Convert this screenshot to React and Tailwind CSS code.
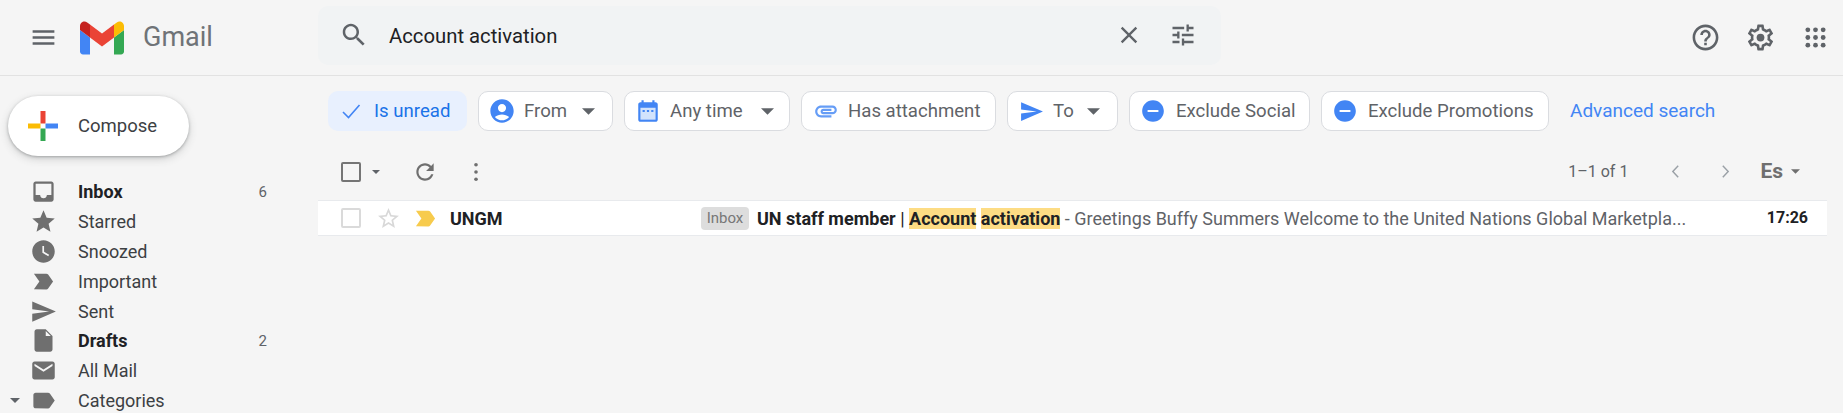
import { Fragment } from "react";

const Icon = ({ d, className = "", fill = "currentColor", children }) => (
  <svg viewBox="0 0 24 24" className={className} fill={fill}>
    {d && <path d={d} fillRule="evenodd" />}
    {children}
  </svg>
);

const paths = {
  menu: "M3 18h18v-2H3v2zm0-5h18v-2H3v2zm0-7v2h18V6H3z",
  search: "M15.5 14h-.79l-.28-.27C15.41 12.59 16 11.11 16 9.5 16 5.91 13.09 3 9.5 3S3 5.91 3 9.5 5.91 16 9.5 16c1.61 0 3.09-.59 4.23-1.57l.27.28v.79l5 4.99L20.49 19l-4.99-5zm-6 0C7.01 14 5 11.99 5 9.5S7.01 5 9.5 5 14 7.01 14 9.5 11.99 14 9.5 14z",
  close: "M19 6.41L17.59 5 12 10.59 6.41 5 5 6.41 10.59 12 5 17.59 6.41 19 12 13.41 17.59 19 19 17.59 13.41 12z",
  tune: "M3 17v2h6v-2H3zM3 5v2h10V5H3zm10 16v-2h8v-2h-8v-2h-2v6h2zM7 9v2H3v2h4v2h2V9H7zm14 4v-2H11v2h10zm-6-4h2V7h4V5h-4V3h-2v6z",
  help: "M11 18h2v-2h-2v2zm1-16C6.48 2 2 6.48 2 12s4.48 10 10 10 10-4.48 10-10S17.52 2 12 2zm0 18c-4.41 0-8-3.59-8-8s3.59-8 8-8 8 3.59 8 8-3.59 8-8 8zm0-14c-2.21 0-4 1.79-4 4h2c0-1.1.9-2 2-2s2 .9 2 2c0 2-3 1.75-3 5h2c0-2.25 3-2.5 3-5 0-2.21-1.79-4-4-4z",
  gear: "M19.43 12.98c.04-.32.07-.64.07-.98 0-.34-.03-.66-.07-.98l2.11-1.65c.19-.15.24-.42.12-.64l-2-3.46c-.09-.16-.26-.25-.44-.25-.06 0-.12.01-.17.03l-2.49 1c-.52-.4-1.08-.73-1.69-.98l-.38-2.65C14.46 2.18 14.25 2 14 2h-4c-.25 0-.46.18-.49.42l-.38 2.65c-.61.25-1.17.59-1.69.98l-2.49-1c-.06-.02-.12-.03-.18-.03-.17 0-.34.09-.43.25l-2 3.46c-.13.22-.07.49.12.64l2.11 1.65c-.04.32-.07.65-.07.98 0 .33.03.66.07.98l-2.11 1.65c-.19.15-.24.42-.12.64l2 3.46c.09.16.26.25.44.25.06 0 .12-.01.17-.03l2.49-1c.52.4 1.08.73 1.69.98l.38 2.65c.03.24.24.42.49.42h4c.25 0 .46-.18.49-.42l.38-2.65c.61-.25 1.17-.59 1.69-.98l2.49 1c.06.02.12.03.18.03.17 0 .34-.09.43-.25l2-3.46c.12-.22.07-.49-.12-.64l-2.11-1.65zm-1.98-1.71c.04.31.05.52.05.73 0 .21-.02.43-.05.73l-.14 1.13.89.7 1.08.84-.7 1.21-1.27-.51-1.04-.42-.9.68c-.43.32-.84.56-1.25.73l-1.06.43-.16 1.13-.2 1.35h-1.4l-.19-1.35-.16-1.13-1.06-.43c-.43-.18-.83-.41-1.23-.71l-.91-.7-1.06.43-1.27.51-.7-1.21 1.08-.84.89-.7-.14-1.13c-.03-.31-.05-.54-.05-.74s.02-.43.05-.73l.14-1.13-.89-.7-1.08-.84.7-1.21 1.27.51 1.04.42.9-.68c.43-.32.84-.56 1.25-.73l1.06-.43.16-1.13.2-1.35h1.39l.19 1.35.16 1.13 1.06.43c.43.18.83.41 1.23.71l.91.7 1.06-.43 1.27-.51.7 1.21-1.07.85-.89.7.14 1.13z",
  refresh: "M17.65 6.35C16.2 4.9 14.21 4 12 4c-4.42 0-7.99 3.58-7.99 8s3.57 8 7.99 8c3.73 0 6.84-2.55 7.73-6h-2.08c-.82 2.33-3.04 4-5.65 4-3.31 0-6-2.69-6-6s2.69-6 6-6c1.66 0 3.14.69 4.22 1.78L13 11h7V4l-2.35 2.35z",
  inbox: "M19 3H5c-1.1 0-2 .9-2 2v14c0 1.1.9 2 2 2h14c1.1 0 2-.9 2-2V5c0-1.1-.9-2-2-2zm0 12h-4c0 1.66-1.35 3-3 3s-3-1.34-3-3H5V5h14v10z",
  star: "M12 17.27L18.18 21l-1.64-7.03L22 9.24l-7.19-.61L12 2 9.19 8.63 2 9.24l5.46 4.73L5.82 21z",
  starBorder: "M22 9.24l-7.19-.62L12 2 9.19 8.63 2 9.24l5.46 4.73L5.82 21 12 17.27 18.18 21l-1.63-7.03L22 9.24zM12 15.4l-3.76 2.27 1-4.28-3.32-2.88 4.38-.38L12 6.1l1.71 4.04 4.38.38-3.32 2.88 1 4.28L12 15.4z",
  clock: "M11.99 2C6.47 2 2 6.48 2 12s4.47 10 9.99 10C17.52 22 22 17.52 22 12S17.52 2 11.99 2zm4.25 14.32L11 13V7h1.5v5.25l4.5 2.67-.76 1.4z",
  important: "M3.5 18.99l11 .01c.67 0 1.27-.33 1.63-.84L20.5 12l-4.37-6.16c-.36-.51-.96-.84-1.63-.84l-11 .01L8.34 12 3.5 18.99z",
  send: "M2.01 21L23 12 2.01 3 2 10l15 2-15 2z",
  draft: "M14 2H6c-1.1 0-2 .9-2 2v16c0 1.1.9 2 2 2h12c1.1 0 2-.9 2-2V8l-6-6zm0 1.5V8h4.5L14 3.5z",
  mail: "M20 4H4c-1.1 0-2 .9-2 2v12c0 1.1.9 2 2 2h16c1.1 0 2-.9 2-2V6c0-1.1-.9-2-2-2zm0 4l-8 5-8-5V6l8 5 8-5v2z",
  label: "M17.63 5.84C17.27 5.33 16.67 5 16 5L5 5.01C3.9 5.01 3 5.9 3 7v10c0 1.1.9 1.99 2 1.99L16 19c.67 0 1.27-.33 1.63-.84L22 12l-4.37-6.16z",
  person: "M12 2C6.48 2 2 6.48 2 12s4.48 10 10 10 10-4.48 10-10S17.52 2 12 2zm0 4c1.93 0 3.5 1.57 3.5 3.5S13.93 13 12 13s-3.5-1.57-3.5-3.5S10.07 6 12 6zm0 14c-2.03 0-4.43-.82-6.14-2.88C7.55 15.8 9.68 15 12 15s4.45.8 6.14 2.12C16.43 19.18 14.03 20 12 20z",
  clip: "M2 12.5C2 9.46 4.46 7 7.5 7H18c2.21 0 4 1.79 4 4s-1.79 4-4 4H9.5C8.12 15 7 13.88 7 12.5S8.12 10 9.5 10H17v2H9.41c-.55 0-.55 1 0 1H18c1.1 0 2-.9 2-2s-.9-2-2-2H7.5C5.57 9 4 10.57 4 12.5S5.57 16 7.5 16H17v2H7.5C4.46 18 2 15.54 2 12.5z",
  minus: "M12 2C6.48 2 2 6.48 2 12s4.48 10 10 10 10-4.48 10-10S17.52 2 12 2zm5 11H7v-2h10v2z",
};

const Caret = ({ className = "" }) => (
  <svg viewBox="0 0 10 5" className={className} fill="currentColor">
    <path d="M0 0h10L5 5z" />
  </svg>
);

const GmailLogo = () => (
  <svg viewBox="52 42 88 66" className="w-[44px] h-[34px] shrink-0">
    <path fill="#4285f4" d="M58 108h14V74L52 59v43c0 3.32 2.69 6 6 6" />
    <path fill="#34a853" d="M120 108h14c3.32 0 6-2.69 6-6V59l-20 15" />
    <path fill="#fbbc04" d="M120 48v26l20-15v-8c0-7.42-8.47-11.65-14.4-7.2" />
    <path fill="#ea4335" d="M72 74V48l24 18 24-18v26L96 92" />
    <path fill="#c5221f" d="M52 51v8l20 15V48l-5.6-4.2c-5.94-4.45-14.4-.22-14.4 7.2" />
  </svg>
);

const CalendarIcon = ({ className }) => (
  <svg viewBox="0 0 24 24" className={className}>
    <path fill="#4285f4" d="M19 4h-1V2h-2v2H8V2H6v2H5C3.9 4 3 4.9 3 6v14c0 1.1.9 2 2 2h14c1.1 0 2-.9 2-2V6c0-1.1-.9-2-2-2z" />
    <path fill="#d2e3fc" d="M5 9h14v11H5z" />
    <path fill="#4285f4" d="M7 11h2v2H7zm4 0h2v2h-2zm4 0h2v2h-2z" />
  </svg>
);

function Chip({ width, children }) {
  return (
    <div className={`h-10 shrink-0 flex items-center bg-white border border-[#dadce0] rounded-[10px] text-[#5f6368] ${width}`}>
      {children}
    </div>
  );
}

const navItems = [
  { name: "Inbox", icon: paths.inbox, bold: true, count: "6" },
  { name: "Starred", icon: paths.star },
  { name: "Snoozed", icon: paths.clock },
  { name: "Important", icon: paths.important },
  { name: "Sent", icon: paths.send },
  { name: "Drafts", icon: paths.draft, bold: true, count: "2" },
  { name: "All Mail", icon: paths.mail },
  { name: "Categories", icon: paths.label, caret: true },
];

export default function App() {
  return (
    <div className="w-[1843px] h-[413px] overflow-hidden bg-[#f5f5f5] font-['Roboto',sans-serif] text-[#202124]">
      {/* HEADER */}
      <header className="h-[76px] flex items-center border-b border-[#e2e2e2]">
        <div className="w-[318px] shrink-0 flex items-center pl-[29px]">
          <Icon d={paths.menu} className="w-[29px] h-[29px] text-[#5f6368] shrink-0" />
          <div className="ml-[22px]"><GmailLogo /></div>
          <span className="ml-[19px] text-[27px] text-[#6f7377] leading-none">Gmail</span>
        </div>
        <div className="w-[903px] h-[59px] -mt-[5px] bg-[#f1f3f4] rounded-[10px] flex items-center pl-[21px] pr-[24px]">
          <Icon d={paths.search} className="w-[30px] h-[30px] text-[#5f6368] shrink-0" />
          <span className="ml-[20px] pt-[3px] text-[20.3px]">Account activation</span>
          <Icon d={paths.close} className="ml-auto w-[28px] h-[28px] text-[#5f6368] shrink-0" />
          <Icon d={paths.tune} className="ml-[26px] w-[28px] h-[28px] text-[#5f6368] shrink-0" />
        </div>
        <div className="ml-auto flex items-center pr-[16px]">
          <Icon d={paths.help} className="w-[31px] h-[31px] text-[#5f6368]" />
          <Icon className="ml-[24px] w-[31px] h-[31px] text-[#5f6368]" d={paths.gear}>
            <circle cx="12" cy="12" r="3" />
          </Icon>
          <svg viewBox="0 0 24 24" className="ml-[28px] w-[23px] h-[23px] text-[#5f6368]" fill="currentColor">
            {[4, 12, 20].map((y) => (
              <Fragment key={y}>
                <circle cx="4" cy={y} r="2.5" />
                <circle cx="12" cy={y} r="2.5" />
                <circle cx="20" cy={y} r="2.5" />
              </Fragment>
            ))}
          </svg>
        </div>
      </header>

      <div className="flex">
        {/* SIDEBAR */}
        <aside className="w-[318px] shrink-0">
          <div className="ml-[8px] mt-[20px] w-[181px] h-[60px] rounded-full bg-white shadow-[0_1px_3px_rgba(60,64,67,0.35),0_3px_8px_rgba(60,64,67,0.2)] flex items-center pl-[20px]">
            <svg viewBox="0 0 30 30" className="w-[30px] h-[30px] shrink-0">
              <path fill="#ea4335" d="M12.5 0h5v12.5h-5z" />
              <path fill="#4285f4" d="M17.5 12.5H30v5H17.5z" />
              <path fill="#34a853" d="M12.5 17.5h5V30h-5z" />
              <path fill="#fbbc04" d="M0 12.5h12.5v5H0z" />
            </svg>
            <span className="ml-[20px] pt-[2px] text-[18.5px] text-[#3c4043]">Compose</span>
          </div>
          <nav className="mt-[21px]">
            {navItems.map((item) => (
              <div key={item.name} className="h-[29.8px] flex items-center">
                <div className="w-[31px] shrink-0 flex justify-end pr-[2px]">
                  {item.caret && <Caret className="w-[10px] h-[5px] text-[#5f6368] mr-[9px]" />}
                </div>
                <Icon d={item.icon} className="w-[27px] h-[27px] text-[#6f6f6f] shrink-0 -ml-[1px]" />
                <span className={`ml-[21px] text-[18px] ${item.bold ? "font-bold text-[#202124]" : "text-[#3c4043]"}`}>{item.name}</span>
                {item.count && <span className="ml-auto mr-[51px] text-[15px] text-[#5f6368]">{item.count}</span>}
              </div>
            ))}
          </nav>
        </aside>

        {/* MAIN */}
        <main className="flex-1 min-w-0 pr-[16px]">
          {/* FILTER CHIPS */}
          <div className="mt-[15px] ml-[10px] flex items-center gap-[11px] text-[18.6px]">
            <div className="w-[139px] h-10 shrink-0 flex items-center bg-[#e8f0fe] rounded-[10px] text-[#1a73e8] pl-[11px]">
              <svg viewBox="0 0 24 24" className="w-[24px] h-[24px]" fill="none" stroke="#4285f4" strokeWidth="1.6"><path d="M4 13l5.5 5.5L20.5 6" /></svg>
              <span className="ml-[11px] pt-[2px]">Is unread</span>
            </div>
            <Chip width="w-[135px] pl-[9px]">
              <Icon d={paths.person} className="w-[28px] h-[28px] text-[#4285f4]" />
              <span className="ml-[8px] pt-[2px]">From</span>
              <Caret className="ml-auto mr-[17px] w-[13px] h-[7px] text-[#5f6368]" />
            </Chip>
            <Chip width="w-[166px] pl-[10px]">
              <CalendarIcon className="w-[26px] h-[26px]" />
              <span className="ml-[9px] pt-[2px]">Any time</span>
              <Caret className="ml-auto mr-[15px] w-[13px] h-[7px] text-[#5f6368]" />
            </Chip>
            <Chip width="w-[195px] pl-[11px]">
              <Icon d={paths.clip} className="w-[26px] h-[26px] text-[#669df6]" />
              <span className="ml-[9px] pt-[2px]">Has attachment</span>
            </Chip>
            <Chip width="w-[111px] pl-[11px]">
              <Icon d={paths.send} className="w-[25px] h-[25px] text-[#4285f4]" />
              <span className="ml-[9px] pt-[2px]">To</span>
              <Caret className="ml-auto mr-[17px] w-[13px] h-[7px] text-[#5f6368]" />
            </Chip>
            <Chip width="w-[181px] pl-[10px]">
              <Icon d={paths.minus} className="w-[26px] h-[26px] text-[#4285f4]" />
              <span className="ml-[10px] pt-[2px]">Exclude Social</span>
            </Chip>
            <Chip width="w-[228px] pl-[10px]">
              <Icon d={paths.minus} className="w-[26px] h-[26px] text-[#4285f4]" />
              <span className="ml-[10px] pt-[2px]">Exclude Promotions</span>
            </Chip>
            <span className="ml-[10px] pt-[1px] text-[19px] text-[#4285f4] whitespace-nowrap">Advanced search</span>
          </div>

          {/* TOOLBAR */}
          <div className="h-[69px] pt-[12px] flex items-center pl-[23px] text-[#6f6f6f]">
            <div className="w-[20px] h-[20px] border-[2px] border-[#757575] rounded-[2px] shrink-0" />
            <Caret className="ml-[11px] w-[8px] h-[4px] text-[#5f6368]" />
            <Icon d={paths.refresh} className="ml-[32px] w-[26px] h-[26px] text-[#6f6f6f]" />
            <svg viewBox="0 0 6 22" className="ml-[35px] w-[6px] h-[20px]" fill="#6f6f6f">
              <circle cx="3" cy="3" r="2" />
              <circle cx="3" cy="11" r="2" />
              <circle cx="3" cy="19" r="2" />
            </svg>
            <span className="ml-auto text-[16px] text-[#5f6368]">1–1 of 1</span>
            <svg viewBox="0 0 10 16" className="ml-[43px] w-[9px] h-[15px]" fill="none" stroke="#9aa0a6" strokeWidth="1.6"><path d="M8 1.5L2 8l6 6.5" /></svg>
            <svg viewBox="0 0 10 16" className="ml-[41px] w-[9px] h-[15px]" fill="none" stroke="#9aa0a6" strokeWidth="1.6"><path d="M2 1.5L8 8l-6 6.5" /></svg>
            <span className="ml-[30px] text-[21px] font-bold text-[#6f6f6f] leading-none">Es</span>
            <Caret className="ml-[8px] mr-[27px] w-[9px] h-[5px] text-[#6f6f6f]" />
          </div>

          {/* MESSAGE ROW */}
          <div className="h-[36px] bg-white border-y border-[#e8eaed] flex items-center pl-[23px] pr-[19px]">
            <div className="w-[20px] h-[20px] border-[2px] border-[#dadada] rounded-[2px] shrink-0" />
            <Icon d={paths.starBorder} className="ml-[15px] w-[25px] h-[25px] text-[#d8d8d8] shrink-0" />
            <Icon d={paths.important} className="ml-[11px] w-[27px] h-[27px] text-[#f7cb4d] shrink-0" />
            <span className="ml-[11px] w-[251px] shrink-0 text-[18px] font-bold">UNGM</span>
            <span className="w-[48px] h-[23px] shrink-0 rounded-[4px] bg-[#dddddd] text-[15px] text-[#777777] flex items-center justify-center">Inbox</span>
            <span className="ml-[8px] flex-1 min-w-0 truncate text-[18px] text-[#5f6368]">
              <b className="font-bold text-[#202124]">UN staff member</b>
              <span className="text-[#202124]"> | </span>
              <b className="font-bold text-[#202124] bg-[#fddc84]">Account</b>{" "}
              <b className="font-bold text-[#202124] bg-[#fddc84]">activation</b>
              {" - Greetings Buffy Summers Welcome to the United Nations Global Marketpla..."}
            </span>
            <span className="ml-[20px] shrink-0 text-[16px] font-bold">17:26</span>
          </div>
        </main>
      </div>
    </div>
  );
}
